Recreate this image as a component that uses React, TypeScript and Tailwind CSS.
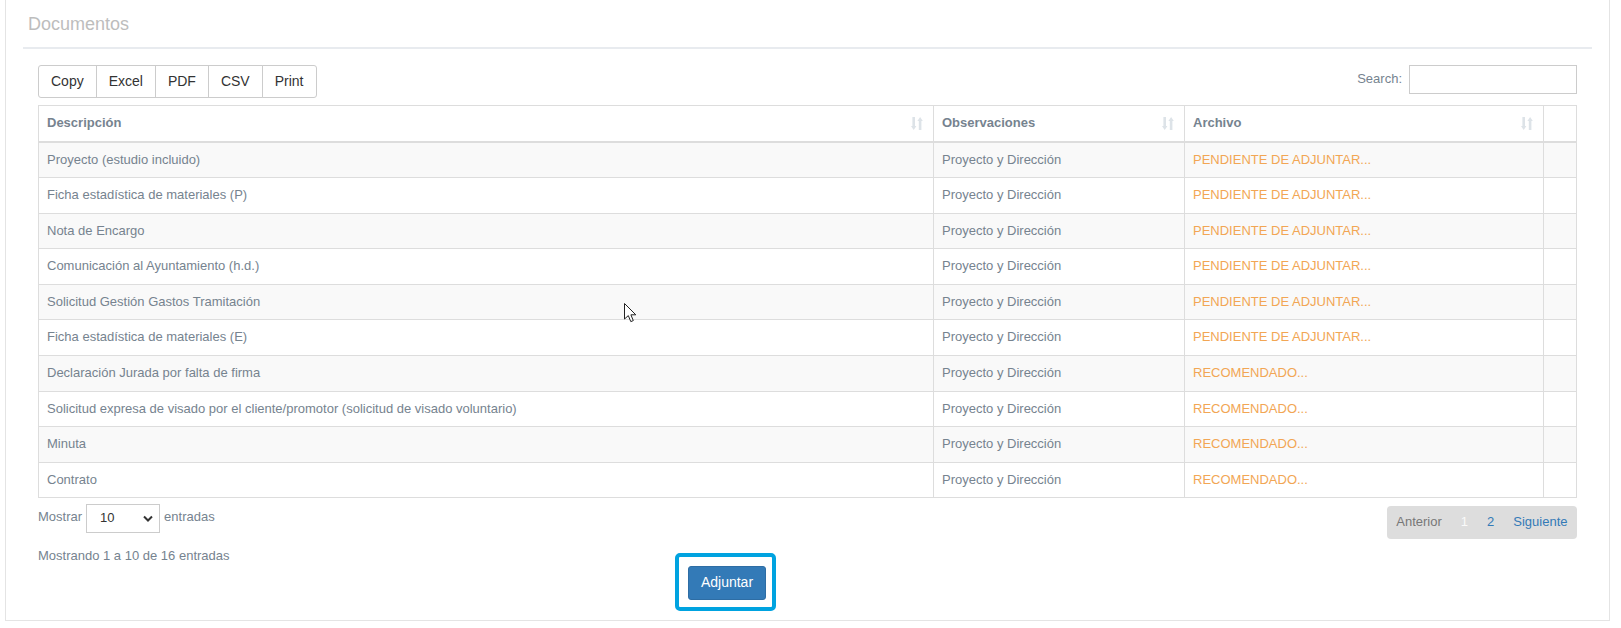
import React from "react";

const rows: [string, string, string][] = [
  ["Proyecto (estudio incluido)", "Proyecto y Dirección", "PENDIENTE DE ADJUNTAR..."],
  ["Ficha estadística de materiales (P)", "Proyecto y Dirección", "PENDIENTE DE ADJUNTAR..."],
  ["Nota de Encargo", "Proyecto y Dirección", "PENDIENTE DE ADJUNTAR..."],
  ["Comunicación al Ayuntamiento (h.d.)", "Proyecto y Dirección", "PENDIENTE DE ADJUNTAR..."],
  ["Solicitud Gestión Gastos Tramitación", "Proyecto y Dirección", "PENDIENTE DE ADJUNTAR..."],
  ["Ficha estadística de materiales (E)", "Proyecto y Dirección", "PENDIENTE DE ADJUNTAR..."],
  ["Declaración Jurada por falta de firma", "Proyecto y Dirección", "RECOMENDADO..."],
  ["Solicitud expresa de visado por el cliente/promotor (solicitud de visado voluntario)", "Proyecto y Dirección", "RECOMENDADO..."],
  ["Minuta", "Proyecto y Dirección", "RECOMENDADO..."],
  ["Contrato", "Proyecto y Dirección", "RECOMENDADO..."],
];

function SortIcon() {
  return (
    <svg width="12" height="15" viewBox="0 0 12 15" className="shrink-0">
      <g fill="#dde3e8">
        <rect x="1.4" y="1" width="2.6" height="9.5" />
        <polygon points="0,10 5.4,10 2.7,14" />
        <rect x="7.8" y="4.5" width="2.6" height="9.5" />
        <polygon points="6.4,5 11.8,5 9.1,1" />
      </g>
    </svg>
  );
}

function Th({ label, sort = true }: { label: string; sort?: boolean }) {
  return (
    <th className="border border-[#dddddd] border-b-2 px-2 py-2 text-left font-bold align-middle">
      <div className="flex items-center justify-between pr-[2px]">
        <span>{label}</span>
        {sort && <SortIcon />}
      </div>
    </th>
  );
}

export default function App() {
  return (
    <div className="relative min-h-[628px] bg-white font-['Liberation_Sans',Arial,sans-serif] text-[13px] leading-[1.42857] text-[#76838f]">
      <div className="ml-[5px] w-[1605px] border-x border-b border-[#e4e4e4] pb-[9px]">
        <div className="px-[17px]">
          <h3 className="pt-[14px] pl-[5px] text-[18px] leading-[20px] font-normal text-[#bdbdbd]">
            Documentos
          </h3>
          <div className="mt-[13px] h-[2px] bg-[#e8ebef]" />
          <div className="px-[15px] pt-[16px]">
            <div className="flex items-start justify-between">
              <div className="flex h-[33px] text-[14px] text-[#333333]">
                {["Copy", "Excel", "PDF", "CSV", "Print"].map((b, i) => (
                  <div
                    key={b}
                    className={`flex items-center border border-[#cccccc] bg-white px-3 ${i === 0 ? "rounded-l-[3px]" : "-ml-px"} ${i === 4 ? "rounded-r-[3px]" : ""}`}
                  >
                    {b}
                  </div>
                ))}
              </div>
              <div className="flex items-center gap-[7px]">
                <span>Search:</span>
                <div className="h-[29px] w-[168px] border border-[#cccccc] bg-white" />
              </div>
            </div>

            <table className="mt-[7px] w-[1538px] table-fixed border-collapse">
              <colgroup>
                <col className="w-[895px]" />
                <col className="w-[251px]" />
                <col className="w-[359px]" />
                <col className="w-[33px]" />
              </colgroup>
              <thead>
                <tr>
                  <Th label="Descripción" />
                  <Th label="Observaciones" />
                  <Th label="Archivo" />
                  <th className="border border-[#dddddd] border-b-2" />
                </tr>
              </thead>
              <tbody>
                {rows.map((r, i) => (
                  <tr key={i} className={i % 2 === 0 ? "bg-[#f9f9f9]" : "bg-white"}>
                    <td className="border border-[#dddddd] px-2 py-2 whitespace-nowrap">{r[0]}</td>
                    <td className="border border-[#dddddd] px-2 py-2 whitespace-nowrap">{r[1]}</td>
                    <td className="border border-[#dddddd] px-2 py-2 whitespace-nowrap text-[#f2a654]">{r[2]}</td>
                    <td className="border border-[#dddddd] px-2 py-2" />
                  </tr>
                ))}
              </tbody>
            </table>

            <div className="flex items-start justify-between">
              <div className="mt-[6px] flex items-center gap-[4px]">
                <span className="-mt-[2px]">Mostrar</span>
                <div className="flex h-[29px] w-[74px] items-center justify-between border border-[#cccccc] bg-white pl-[13px] pr-[6px] text-[#333333]">
                  <span>10</span>
                  <svg width="10" height="7" viewBox="0 0 10 7">
                    <path d="M1 1.5 L5 5.5 L9 1.5" fill="none" stroke="#333" strokeWidth="2" />
                  </svg>
                </div>
                <span className="-mt-[2px]">entradas</span>
              </div>
              <div className="mt-[8px] flex h-[33px] items-center rounded-[4px] bg-[#dddddd]">
                <span className="px-[9.5px] text-[#777777]">Anterior</span>
                <span className="px-[9.5px] text-[#fafafa]">1</span>
                <span className="px-[9.5px] text-[#337ab7]">2</span>
                <span className="px-[9.5px] text-[#337ab7]">Siguiente</span>
              </div>
            </div>

            <div className="mt-[8px] flex items-start">
              <div className="w-[637px]">Mostrando 1 a 10 de 16 entradas</div>
              <div className="mt-[6px] rounded-[5px] border-4 border-[#00a3e0] pt-[9px] pb-[7px] pl-[9px] pr-[6px]">
                <div className="flex h-[34px] w-[78px] items-center justify-center rounded-[3px] border border-[#2e6da4] bg-[#337ab7] text-[14px] text-white">
                  Adjuntar
                </div>
              </div>
            </div>
          </div>
        </div>
      </div>

      <svg
        className="pointer-events-none absolute left-[624px] top-[303px]"
        width="13"
        height="20"
        viewBox="0 0 13 20"
      >
        <path
          d="M0.5 0.5 L0.5 16 L4.3 12.6 L6.8 18.6 L9.3 17.6 L6.9 11.8 L11.8 11.8 Z"
          fill="white"
          stroke="#222"
          strokeWidth="1"
          strokeLinejoin="round"
        />
      </svg>
    </div>
  );
}
